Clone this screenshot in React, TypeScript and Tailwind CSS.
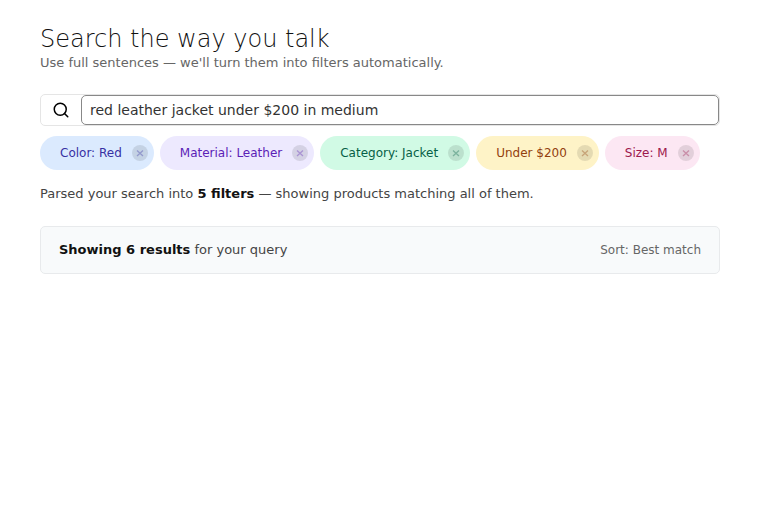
import { useState } from 'react';
import { Search } from 'lucide-react';

const filters = [
  { label: 'Color: Red', chip: 'bg-[#dbeafe] text-[#3730a3]' },
  { label: 'Material: Leather', chip: 'bg-[#ede9fe] text-[#5b21b6]' },
  { label: 'Category: Jacket', chip: 'bg-[#d1fae5] text-[#065f46]' },
  { label: 'Under $200', chip: 'bg-[#fef3c7] text-[#92400e]' },
  { label: 'Size: M', chip: 'bg-[#fce7f3] text-[#9d174d]' },
];

function FilterChip({ label, chip }: { label: string; chip: string }) {
  return (
    <li className={`flex h-[34px] items-center gap-[10px] rounded-full pl-5 pr-[6px] text-[12px] ${chip}`}>
      <span>{label}</span>
      <button
        type="button"
        aria-label={`Remove ${label}`}
        className="flex size-4 items-center justify-center rounded-full bg-black/10"
      >
        <svg className="size-4 opacity-35" viewBox="0 0 16 16" fill="none" stroke="currentColor" strokeWidth={1.3}>
          <path d="M5 5.5l6 5.5M11 5.5L5 11" />
        </svg>
      </button>
    </li>
  );
}

export default function App() {
  const [query, setQuery] = useState('red leather jacket under $200 in medium');

  return (
    <main className="px-10 pt-[25px] font-['DejaVu_Sans',sans-serif] text-[13px] leading-5 text-[#444]">
      <h1 className="text-[24px] font-extralight leading-7 text-[#111]">Search the way you talk</h1>
      <p className="text-[#666]">Use full sentences — we'll turn them into filters automatically.</p>

      <form
        className="mt-[21px] flex h-8 rounded-[5px] border border-[#e5e5e5]"
        onSubmit={(e) => e.preventDefault()}
      >
        <button type="submit" aria-label="Search" className="flex w-10 items-center justify-center text-black">
          <Search className="size-[18px]" strokeWidth={2} />
        </button>
        <input
          type="text"
          aria-label="Search products"
          value={query}
          onChange={(e) => setQuery(e.target.value)}
          className="min-w-0 flex-1 rounded-[5px] border border-[#888] bg-white px-2 text-[14px] text-[#333] outline-none"
        />
      </form>

      <ul className="mt-[10px] flex flex-wrap gap-[6px]">
        {filters.map((filter) => (
          <FilterChip key={filter.label} {...filter} />
        ))}
      </ul>

      <p className="mt-[14px]">
        Parsed your search into <strong className="text-[#111]">5 filters</strong> — showing products matching all of
        them.
      </p>

      <section className="mt-[22px] flex items-center justify-between rounded-[5px] border border-[#e8eaec] bg-[#f8fafb] px-[18px] py-[13px]">
        <p>
          <strong className="text-[#111]">Showing 6 results</strong> for your query
        </p>
        <span className="text-[12px] text-[#666]">Sort: Best match</span>
      </section>
    </main>
  );
}
